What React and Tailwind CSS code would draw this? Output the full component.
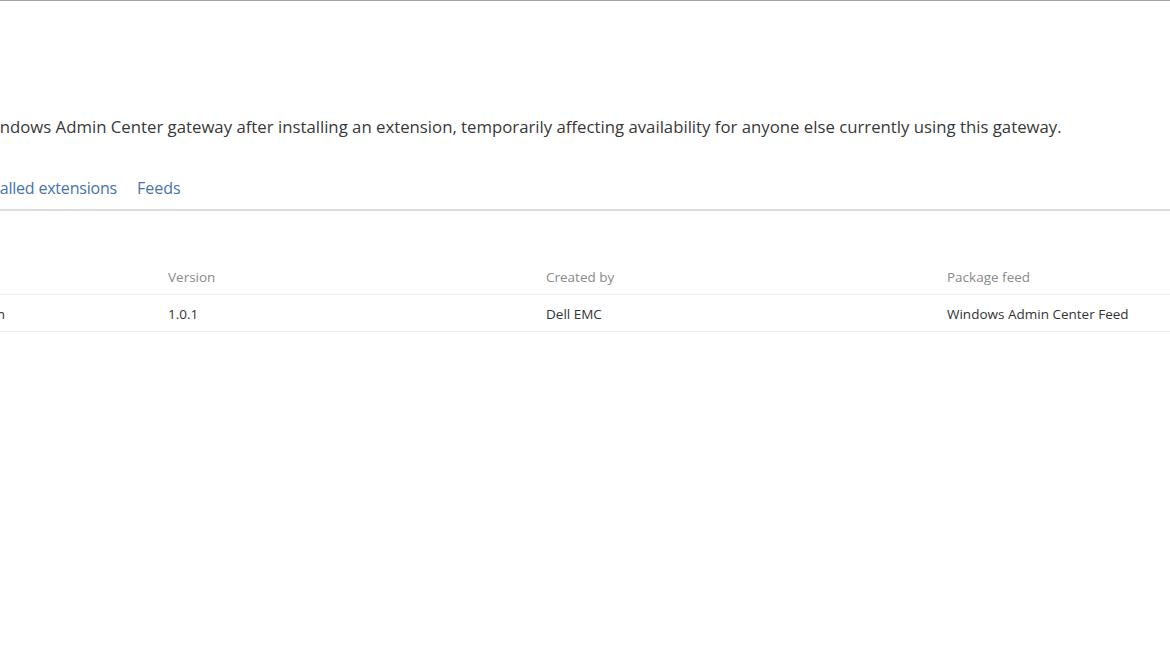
export default function App() {
  return (
    <div className="w-[1170px] h-[663px] overflow-hidden bg-white border-t border-[#a3a3a3]" style={{ fontFamily: '"Open Sans", "Noto Sans", sans-serif' }}>
      <p className="mt-[114px] ml-[-20px] flex whitespace-nowrap text-[16.75px] leading-[24px] text-[#383838]">
        <span className="w-0 shrink-0 flex justify-end">
          <span>You must restart the&nbsp;</span>
        </span>
        <span>Windows Admin Center gateway after installing an extension, temporarily affecting availability for anyone else currently using this gateway.</span>
      </p>
      <div className="mt-[37px] flex pb-[9px] border-b-2 border-[#dcdcdc] text-[16px] leading-[24px] text-[#4673a8] whitespace-nowrap">
        <div className="w-[117px] shrink-0 flex justify-end gap-[20px]">
          <span>Available extensions</span>
          <span className="tracking-[-0.2px]">Installed extensions</span>
        </div>
        <span className="ml-[20px]">Feeds</span>
      </div>
      <div className="mt-[56px] text-[13.5px] whitespace-nowrap">
        <div className="flex border-b border-[#ebebeb] pb-[7px] leading-[20px] text-[#8a8a8a]">
          <div className="w-[168px] shrink-0">
            <span className="ml-[-230px]">Name</span>
          </div>
          <div className="w-[378px] shrink-0">Version</div>
          <div className="w-[401px] shrink-0">Created by</div>
          <div>Package feed</div>
        </div>
        <div className="flex border-b border-[#ebebeb] pt-[9px] pb-[7px] leading-[20px] text-[#333333]">
          <div className="w-[168px] shrink-0 flex justify-end pr-[163px]">
            <span>Dell EMC OpenManage Integration</span>
          </div>
          <div className="w-[378px] shrink-0">1.0.1</div>
          <div className="w-[401px] shrink-0">Dell EMC</div>
          <div>Windows Admin Center Feed</div>
        </div>
      </div>
    </div>
  );
}
